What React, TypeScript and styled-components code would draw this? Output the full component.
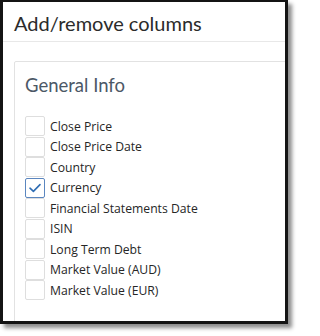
import React from "react";
import styled, { createGlobalStyle } from "styled-components";

const Global = createGlobalStyle`
  html, body { margin: 0; padding: 0; background: #ffffff; }
  body { width: 300px; height: 336px; overflow: hidden; }
`;

const Frame = styled.div`
  box-sizing: border-box;
  width: 288px;
  height: 324px;
  border: 3px solid #141414;
  border-top-width: 2px;
  box-shadow: 4px 4px 4px rgba(0, 0, 0, 0.45);
  background: #ffffff;
  overflow: hidden;
  display: flex;
  flex-direction: column;
`;

const Header = styled.div`
  box-sizing: border-box;
  height: 40px;
  flex: none;
  padding: 9px 0 0 11px;
  border-bottom: 1px solid #e8e8e8;
  font-family: Lato, "Open Sans", sans-serif;
  font-size: 20px;
  color: #2b2b2b;
`;

const Body = styled.div`
  flex: 1;
  padding: 19px 0 0 11px;
  display: flex;
`;

const Card = styled.div`
  box-sizing: border-box;
  width: 300px;
  height: 300px;
  flex: none;
  border: 1px solid #e2e2e2;
  border-radius: 2px;
  padding: 12px 0 0 10px;
`;

const Title = styled.div`
  font-family: Lato, "Open Sans", sans-serif;
  font-size: 18.5px;
  color: #4c5866;
  height: 42px;
`;

const List = styled.div`
  display: flex;
  flex-direction: column;
`;

const Row = styled.label`
  display: flex;
  align-items: center;
  height: 20.5px;
  gap: 5px;
  font-family: "Open Sans", sans-serif;
  font-size: 12.2px;
  color: #262626;
`;

const Box = styled.span<{ $checked?: boolean }>`
  box-sizing: border-box;
  width: 20px;
  height: 20px;
  flex: none;
  border: 1px solid ${(p) => (p.$checked ? "#5b86bf" : "#dedede")};
  border-radius: 2px;
  background: #ffffff;
  display: flex;
  align-items: center;
  justify-content: center;
`;

const items: { label: string; checked?: boolean }[] = [
  { label: "Close Price" },
  { label: "Close Price Date" },
  { label: "Country" },
  { label: "Currency", checked: true },
  { label: "Financial Statements Date" },
  { label: "ISIN" },
  { label: "Long Term Debt" },
  { label: "Market Value (AUD)" },
  { label: "Market Value (EUR)" },
];

export default function App() {
  return (
    <>
      <Global />
      <Frame>
        <Header>Add/remove columns</Header>
        <Body>
          <Card>
            <Title>General Info</Title>
            <List>
              {items.map((it) => (
                <Row key={it.label}>
                  <Box $checked={it.checked}>
                    {it.checked && (
                      <svg width="14" height="14" viewBox="0 0 14 14">
                        <path
                          d="M2 7.2 L5.4 10.4 L12 3.6"
                          fill="none"
                          stroke="#2f6db3"
                          strokeWidth="1.6"
                          strokeLinecap="round"
                          strokeLinejoin="round"
                        />
                      </svg>
                    )}
                  </Box>
                  {it.label}
                </Row>
              ))}
            </List>
          </Card>
        </Body>
      </Frame>
    </>
  );
}
